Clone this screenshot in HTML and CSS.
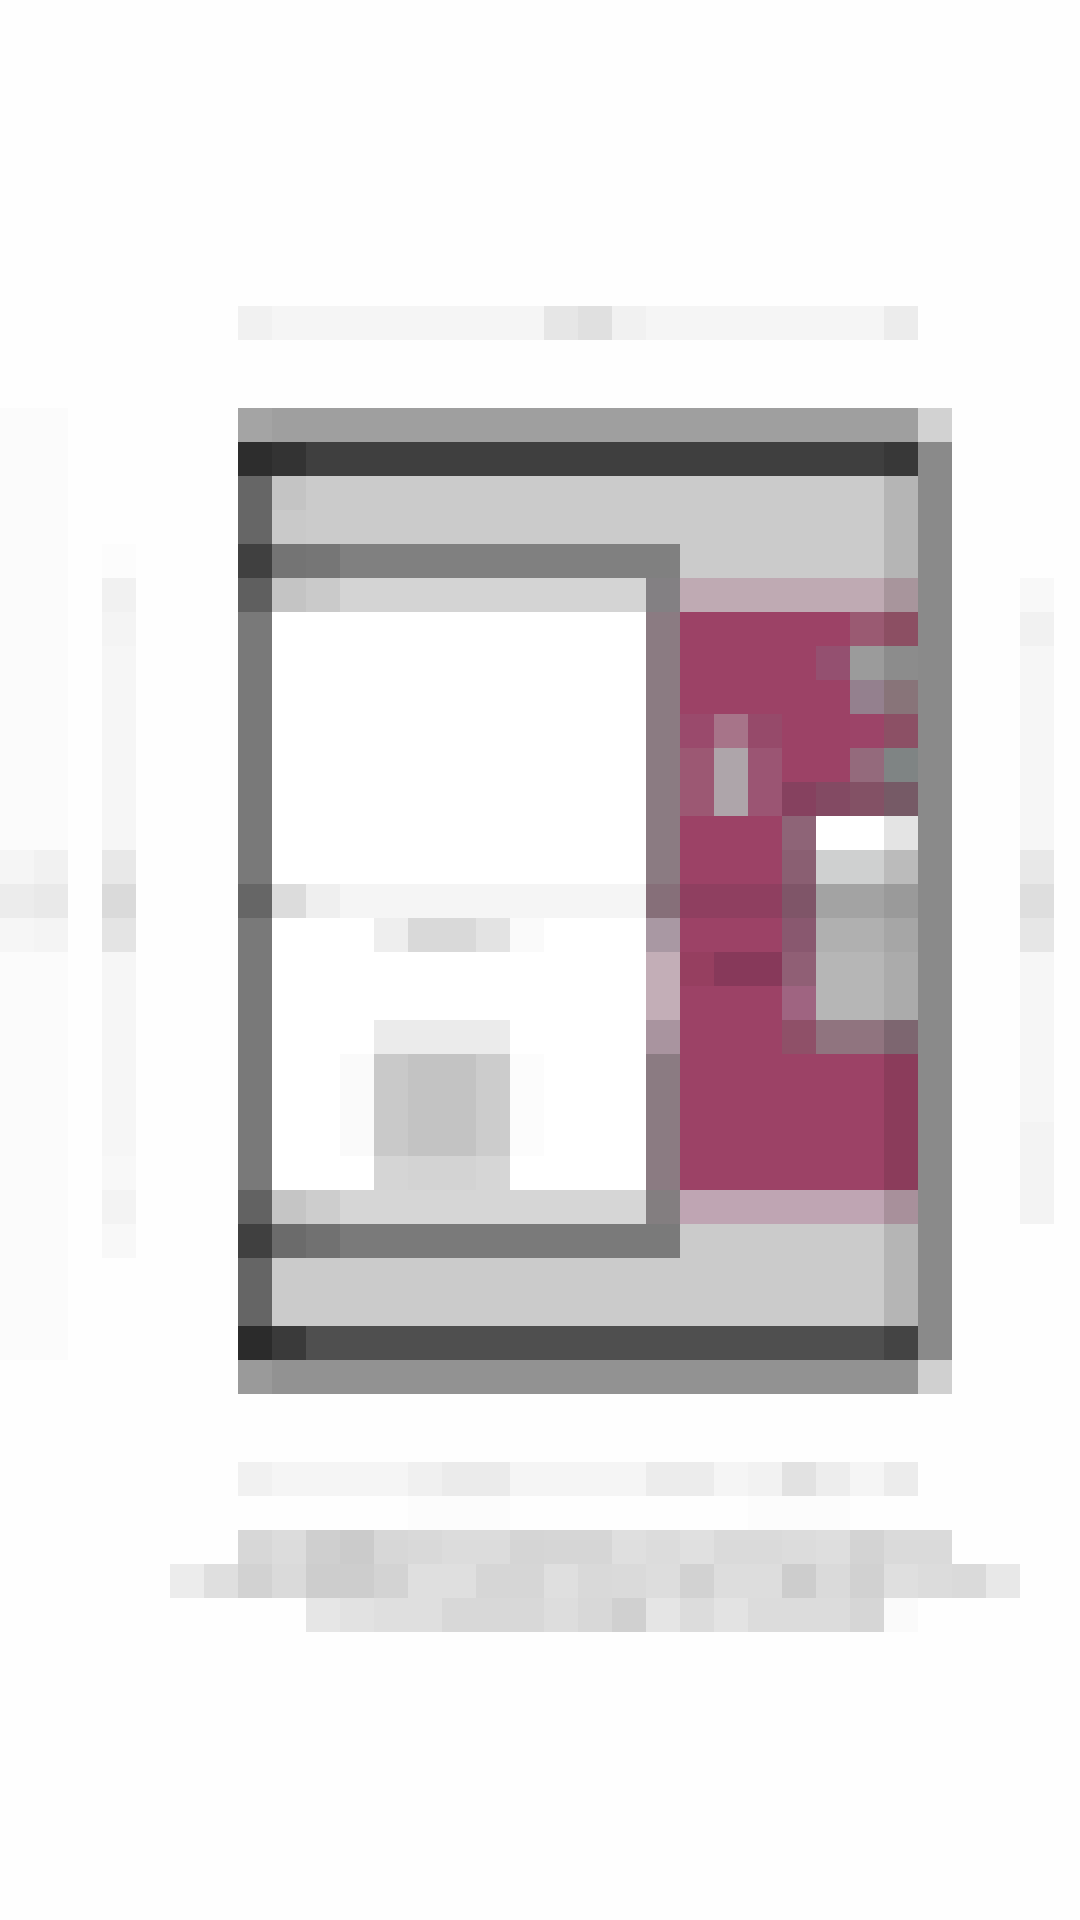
FILE: index.html
```html
<!DOCTYPE html>
<html lang="en">
<head>
<meta charset="utf-8">
<title>Thumbnail</title>
<link rel="stylesheet" href="styles.css">
</head>
<body>
<main class="mosaic">
<div class="row"><i class="w7"></i><i class="gf1"></i><i class="w8 gf5"></i><i class="ge6"></i><i class="ge0"></i><i class="gf1"></i><i class="w7 gf5"></i><i class="gec"></i></div>
<div class="row"></div>
<div class="row"></div>
<div class="row"><i class="w2 gfb"></i><i class="w5"></i><i class="ga4"></i><i class="w19 g9f"></i><i class="gd2"></i></div>
<div class="row"><i class="w2 gfb"></i><i class="w5"></i><i class="g2d"></i><i class="g33"></i><i class="w17 g3f"></i><i class="g38"></i><i class="g8a"></i></div>
<div class="row"><i class="w2 gfb"></i><i class="w5"></i><i class="g66"></i><i class="gc4"></i><i class="w17 gcb"></i><i class="gb5"></i><i class="g8a"></i></div>
<div class="row"><i class="w2 gfb"></i><i class="w5"></i><i class="g66"></i><i class="gc9"></i><i class="w17 gcb"></i><i class="gb5"></i><i class="g8a"></i></div>
<div class="row"><i class="w2 gfb"></i><i></i><i class="gfc"></i><i class="w3"></i><i class="g40"></i><i class="g74"></i><i class="g76"></i><i class="w10 g80"></i><i class="w6 gcb"></i><i class="gb5"></i><i class="g8a"></i></div>
<div class="row"><i class="w2 gfb"></i><i></i><i class="gf1"></i><i class="w3"></i><i class="g5f"></i><i class="gc4"></i><i class="gca"></i><i class="w9 gd4"></i><i class="x838083"></i><i class="w6 xbfaab3"></i><i class="xa8959c"></i><i class="g8a"></i><i class="w2"></i><i class="gf8"></i></div>
<div class="row"><i class="w2 gfb"></i><i></i><i class="gf4"></i><i class="w3"></i><i class="g79"></i><i class="w11 gff"></i><i class="x8b7b82"></i><i class="w5 x9c4266"></i><i class="x9a5a72"></i><i class="x8c4f63"></i><i class="g8a"></i><i class="w2"></i><i class="gf1"></i></div>
<div class="row"><i class="w2 gfb"></i><i></i><i class="gf6"></i><i class="w3"></i><i class="g79"></i><i class="w11 gff"></i><i class="x8b7b82"></i><i class="w4 x9c4266"></i><i class="x945070"></i><i class="g9b"></i><i class="g8c"></i><i class="g8a"></i><i class="w2"></i><i class="gf6"></i></div>
<div class="row"><i class="w2 gfb"></i><i></i><i class="gf6"></i><i class="w3"></i><i class="g79"></i><i class="w11 gff"></i><i class="x8b7b82"></i><i class="w5 x9c4266"></i><i class="x94808e"></i><i class="x887479"></i><i class="g8a"></i><i class="w2"></i><i class="gf6"></i></div>
<div class="row"><i class="w2 gfb"></i><i></i><i class="gf6"></i><i class="w3"></i><i class="g79"></i><i class="w11 gff"></i><i class="x8b7b82"></i><i class="x9a4a6c"></i><i class="xa77489"></i><i class="x964a6a"></i><i class="w2 x9c4266"></i><i class="x9c4468"></i><i class="x8c5065"></i><i class="g8a"></i><i class="w2"></i><i class="gf6"></i></div>
<div class="row"><i class="w2 gfb"></i><i></i><i class="gf6"></i><i class="w3"></i><i class="g79"></i><i class="w11 gff"></i><i class="x8b7b82"></i><i class="x9c5873"></i><i class="xaea5aa"></i><i class="x9b5573"></i><i class="w2 x9c4266"></i><i class="x946a7c"></i><i class="x7f8484"></i><i class="g8a"></i><i class="w2"></i><i class="gf6"></i></div>
<div class="row"><i class="w2 gfb"></i><i></i><i class="gf6"></i><i class="w3"></i><i class="g79"></i><i class="w11 gff"></i><i class="x8b7b82"></i><i class="x9c5873"></i><i class="xaea5aa"></i><i class="x9b5573"></i><i class="x86415f"></i><i class="x834a63"></i><i class="x835165"></i><i class="x765a66"></i><i class="g8a"></i><i class="w2"></i><i class="gf6"></i></div>
<div class="row"><i class="w2 gfb"></i><i></i><i class="gf6"></i><i class="w3"></i><i class="g79"></i><i class="w11 gff"></i><i class="x8b7b82"></i><i class="w3 x9c4266"></i><i class="x8e6477"></i><i class="w2 gff"></i><i class="ge4"></i><i class="g8a"></i><i class="w2"></i><i class="gf6"></i></div>
<div class="row"><i class="gf5"></i><i class="gf1"></i><i></i><i class="ge8"></i><i class="w3"></i><i class="g79"></i><i class="w11 gff"></i><i class="x8b7b82"></i><i class="w3 x9c4266"></i><i class="x8a5f72"></i><i class="w2 xcfd0d0"></i><i class="gbb"></i><i class="g8a"></i><i class="w2"></i><i class="ge8"></i></div>
<div class="row"><i class="gec"></i><i class="ge9"></i><i></i><i class="gda"></i><i class="w3"></i><i class="g66"></i><i class="gdc"></i><i class="gef"></i><i class="w9 gf5"></i><i class="x866f79"></i><i class="w3 x8f3f60"></i><i class="x7f5568"></i><i class="w2 ga3"></i><i class="g9a"></i><i class="g8a"></i><i class="w2"></i><i class="gde"></i></div>
<div class="row"><i class="gf6"></i><i class="gf4"></i><i></i><i class="ge4"></i><i class="w3"></i><i class="g79"></i><i class="w3 gff"></i><i class="gee"></i><i class="w2 gd9"></i><i class="ge3"></i><i class="gfa"></i><i class="w3 gff"></i><i class="xa998a3"></i><i class="w3 x9c4266"></i><i class="x89586f"></i><i class="w2 gb0"></i><i class="ga6"></i><i class="g8a"></i><i class="w2"></i><i class="ge6"></i></div>
<div class="row"><i class="w2 gfb"></i><i></i><i class="gf6"></i><i class="w3"></i><i class="g79"></i><i class="w11 gff"></i><i class="xc3aeb7"></i><i class="x963f60"></i><i class="w2 x87395a"></i><i class="x905f75"></i><i class="w2 gb6"></i><i class="gab"></i><i class="g8a"></i><i class="w2"></i><i class="gf6"></i></div>
<div class="row"><i class="w2 gfb"></i><i></i><i class="gf6"></i><i class="w3"></i><i class="g79"></i><i class="w11 gff"></i><i class="xc3aeb7"></i><i class="w3 x9c4266"></i><i class="x9f6481"></i><i class="w2 gb6"></i><i class="gab"></i><i class="g8a"></i><i class="w2"></i><i class="gf6"></i></div>
<div class="row"><i class="w2 gfb"></i><i></i><i class="gf6"></i><i class="w3"></i><i class="g79"></i><i class="w3 gff"></i><i class="w4 geb"></i><i class="w4 gff"></i><i class="xa9949f"></i><i class="w3 x9c4266"></i><i class="x8f5068"></i><i class="w2 x90747f"></i><i class="x7d6670"></i><i class="g8a"></i><i class="w2"></i><i class="gf6"></i></div>
<div class="row"><i class="w2 gfb"></i><i></i><i class="gf6"></i><i class="w3"></i><i class="g79"></i><i class="w2 gff"></i><i class="gfa"></i><i class="gc9"></i><i class="w2 gc3"></i><i class="gcc"></i><i class="gfc"></i><i class="w3 gff"></i><i class="x8b7b82"></i><i class="w6 x9c4266"></i><i class="x8b3c5b"></i><i class="g8a"></i><i class="w2"></i><i class="gf6"></i></div>
<div class="row"><i class="w2 gfb"></i><i></i><i class="gf6"></i><i class="w3"></i><i class="g79"></i><i class="w2 gff"></i><i class="gfa"></i><i class="gc9"></i><i class="w2 gc3"></i><i class="gcc"></i><i class="gfc"></i><i class="w3 gff"></i><i class="x8b7b82"></i><i class="w6 x9c4266"></i><i class="x8b3c5b"></i><i class="g8a"></i><i class="w2"></i><i class="gf6"></i></div>
<div class="row"><i class="w2 gfb"></i><i></i><i class="gf6"></i><i class="w3"></i><i class="g79"></i><i class="w2 gff"></i><i class="gfa"></i><i class="gc9"></i><i class="w2 gc3"></i><i class="gcc"></i><i class="gfc"></i><i class="w3 gff"></i><i class="x8b7b82"></i><i class="w6 x9c4266"></i><i class="x8b3c5b"></i><i class="g8a"></i><i class="w2"></i><i class="gf3"></i></div>
<div class="row"><i class="w2 gfb"></i><i></i><i class="gf8"></i><i class="w3"></i><i class="g79"></i><i class="w3 gff"></i><i class="gd5"></i><i class="w2 gd3"></i><i class="gd6"></i><i class="w4 gff"></i><i class="x8b7b82"></i><i class="w6 x9c4266"></i><i class="x8b3c5b"></i><i class="g8a"></i><i class="w2"></i><i class="gf3"></i></div>
<div class="row"><i class="w2 gfb"></i><i></i><i class="gf3"></i><i class="w3"></i><i class="g62"></i><i class="gc5"></i><i class="gcd"></i><i class="w9 gd6"></i><i class="x837e80"></i><i class="w6 xbfa5b3"></i><i class="xa8909b"></i><i class="g8a"></i><i class="w2"></i><i class="gf3"></i></div>
<div class="row"><i class="w2 gfb"></i><i></i><i class="gf8"></i><i class="w3"></i><i class="g40"></i><i class="g6b"></i><i class="g71"></i><i class="w10 g7a"></i><i class="w6 gcb"></i><i class="gb5"></i><i class="g8a"></i></div>
<div class="row"><i class="w2 gfb"></i><i class="w5"></i><i class="g65"></i><i class="w18 gcb"></i><i class="gb5"></i><i class="g8a"></i></div>
<div class="row"><i class="w2 gfb"></i><i class="w5"></i><i class="g65"></i><i class="w18 gcb"></i><i class="gb5"></i><i class="g8a"></i></div>
<div class="row"><i class="w2 gfb"></i><i class="w5"></i><i class="g2b"></i><i class="g3a"></i><i class="w17 g4f"></i><i class="g44"></i><i class="g8a"></i></div>
<div class="row"><i class="w7"></i><i class="g9a"></i><i class="w19 g92"></i><i class="gd0"></i></div>
<div class="row"></div>
<div class="row"></div>
<div class="row"><i class="w7"></i><i class="gf1"></i><i class="w4 gf5"></i><i class="gf0"></i><i class="w2 geb"></i><i class="w4 gf5"></i><i class="w2 gec"></i><i class="gf5"></i><i class="gf2"></i><i class="ge2"></i><i class="ged"></i><i class="gf5"></i><i class="gec"></i></div>
<div class="row"><i class="w12"></i><i class="w3 gfc"></i><i class="w7"></i><i class="w3 gfc"></i></div>
<div class="row"><i class="w7"></i><i class="gd7"></i><i class="gdc"></i><i class="gcf"></i><i class="gcb"></i><i class="gd7"></i><i class="gd9"></i><i class="w2 gdc"></i><i class="gd5"></i><i class="gd6"></i><i class="gd6"></i><i class="gdf"></i><i class="gdc"></i><i class="ge0"></i><i class="w2 gda"></i><i class="gdc"></i><i class="gde"></i><i class="gd3"></i><i class="w2 gda"></i></div>
<div class="row"><i class="w5"></i><i class="gec"></i><i class="gdf"></i><i class="gd2"></i><i class="gda"></i><i class="w2 gcd"></i><i class="gd3"></i><i class="w2 gdf"></i><i class="w2 gd6"></i><i class="gdf"></i><i class="gd9"></i><i class="gda"></i><i class="gdd"></i><i class="gd2"></i><i class="w2 gdd"></i><i class="gcd"></i><i class="gda"></i><i class="gd1"></i><i class="gdf"></i><i class="gdc"></i><i class="gda"></i><i class="ge8"></i></div>
<div class="row"><i class="w9"></i><i class="ge6"></i><i class="ge2"></i><i class="w2 gdf"></i><i class="w3 gd8"></i><i class="gdd"></i><i class="gd8"></i><i class="gd0"></i><i class="ge5"></i><i class="gdc"></i><i class="ge3"></i><i class="w3 gdc"></i><i class="gd6"></i><i class="gfa"></i></div>
</main>
</body>
</html>
```
FILE: styles.css
```css
html, body { margin: 0; height: 100%; background: #fefefe; overflow: hidden; }
.mosaic { display: flex; flex-direction: column; padding-top: 306px; }
.row { display: flex; height: 34px; }
.row i { display: block; flex: none; width: 34px; height: 34px; }
.row .w2 { width: 68px; } .row .w3 { width: 102px; } .row .w4 { width: 136px; }
.row .w5 { width: 170px; } .row .w6 { width: 204px; } .row .w7 { width: 238px; }
.row .w8 { width: 272px; } .row .w9 { width: 306px; } .row .w10 { width: 340px; }
.row .w11 { width: 374px; } .row .w12 { width: 408px; } .row .w17 { width: 578px; }
.row .w18 { width: 612px; } .row .w19 { width: 646px; }

.g2b { background: #2b2b2b; } .g2d { background: #2d2d2d; } .g33 { background: #333333; }
.g38 { background: #383838; } .g3a { background: #3a3a3a; } .g3f { background: #3f3f3f; }
.g40 { background: #404040; } .g44 { background: #444444; } .g4f { background: #4f4f4f; }
.g5f { background: #5f5f5f; } .g62 { background: #626262; } .g65 { background: #656565; }
.g66 { background: #666666; } .g6b { background: #6b6b6b; } .g71 { background: #717171; }
.g74 { background: #747474; } .g76 { background: #767676; } .g79 { background: #797979; }
.g7a { background: #7a7a7a; } .g80 { background: #808080; } .g8a { background: #8a8a8a; }
.g8c { background: #8c8c8c; } .g92 { background: #929292; } .g9a { background: #9a9a9a; }
.g9b { background: #9b9b9b; } .g9f { background: #9f9f9f; } .ga3 { background: #a3a3a3; }
.ga4 { background: #a4a4a4; } .ga6 { background: #a6a6a6; } .gab { background: #ababab; }
.gb0 { background: #b0b0b0; } .gb5 { background: #b5b5b5; } .gb6 { background: #b6b6b6; }
.gbb { background: #bbbbbb; } .gc3 { background: #c3c3c3; } .gc4 { background: #c4c4c4; }
.gc5 { background: #c5c5c5; } .gc9 { background: #c9c9c9; } .gca { background: #cacaca; }
.gcb { background: #cbcbcb; } .gcc { background: #cccccc; } .gcd { background: #cdcdcd; }
.gcf { background: #cfcfcf; } .gd0 { background: #d0d0d0; } .gd1 { background: #d1d1d1; }
.gd2 { background: #d2d2d2; } .gd3 { background: #d3d3d3; } .gd4 { background: #d4d4d4; }
.gd5 { background: #d5d5d5; } .gd6 { background: #d6d6d6; } .gd7 { background: #d7d7d7; }
.gd8 { background: #d8d8d8; } .gd9 { background: #d9d9d9; } .gda { background: #dadada; }
.gdc { background: #dcdcdc; } .gdd { background: #dddddd; } .gde { background: #dedede; }
.gdf { background: #dfdfdf; } .ge0 { background: #e0e0e0; } .ge2 { background: #e2e2e2; }
.ge3 { background: #e3e3e3; } .ge4 { background: #e4e4e4; } .ge5 { background: #e5e5e5; }
.ge6 { background: #e6e6e6; } .ge8 { background: #e8e8e8; } .ge9 { background: #e9e9e9; }
.geb { background: #ebebeb; } .gec { background: #ececec; } .ged { background: #ededed; }
.gee { background: #eeeeee; } .gef { background: #efefef; } .gf0 { background: #f0f0f0; }
.gf1 { background: #f1f1f1; } .gf2 { background: #f2f2f2; } .gf3 { background: #f3f3f3; }
.gf4 { background: #f4f4f4; } .gf5 { background: #f5f5f5; } .gf6 { background: #f6f6f6; }
.gf8 { background: #f8f8f8; } .gfa { background: #fafafa; } .gfb { background: #fbfbfb; }
.gfc { background: #fcfcfc; } .gff { background: #ffffff; }

.x9c4266 { background: #9c4266; } .x8f3f60 { background: #8f3f60; } .x963f60 { background: #963f60; }
.x87395a { background: #87395a; } .x86415f { background: #86415f; } .x8b3c5b { background: #8b3c5b; }
.x9c4468 { background: #9c4468; } .x9a4a6c { background: #9a4a6c; } .x964a6a { background: #964a6a; }
.x945070 { background: #945070; } .x9a5a72 { background: #9a5a72; } .x8c4f63 { background: #8c4f63; }
.x8c5065 { background: #8c5065; } .x9c5873 { background: #9c5873; } .x9b5573 { background: #9b5573; }
.x834a63 { background: #834a63; } .x835165 { background: #835165; } .x765a66 { background: #765a66; }
.x946a7c { background: #946a7c; } .x7f8484 { background: #7f8484; } .xa77489 { background: #a77489; }
.xaea5aa { background: #aea5aa; } .x94808e { background: #94808e; } .x887479 { background: #887479; }
.x8e6477 { background: #8e6477; } .x8a5f72 { background: #8a5f72; } .x7f5568 { background: #7f5568; }
.x89586f { background: #89586f; } .x905f75 { background: #905f75; } .x9f6481 { background: #9f6481; }
.x8f5068 { background: #8f5068; } .x90747f { background: #90747f; } .x7d6670 { background: #7d6670; }
.x838083 { background: #838083; } .x8b7b82 { background: #8b7b82; } .x866f79 { background: #866f79; }
.x837e80 { background: #837e80; } .xa8959c { background: #a8959c; } .xa8909b { background: #a8909b; }
.xa998a3 { background: #a998a3; } .xa9949f { background: #a9949f; } .xbfaab3 { background: #bfaab3; }
.xbfa5b3 { background: #bfa5b3; } .xc3aeb7 { background: #c3aeb7; } .xcfd0d0 { background: #cfd0d0; }
```
